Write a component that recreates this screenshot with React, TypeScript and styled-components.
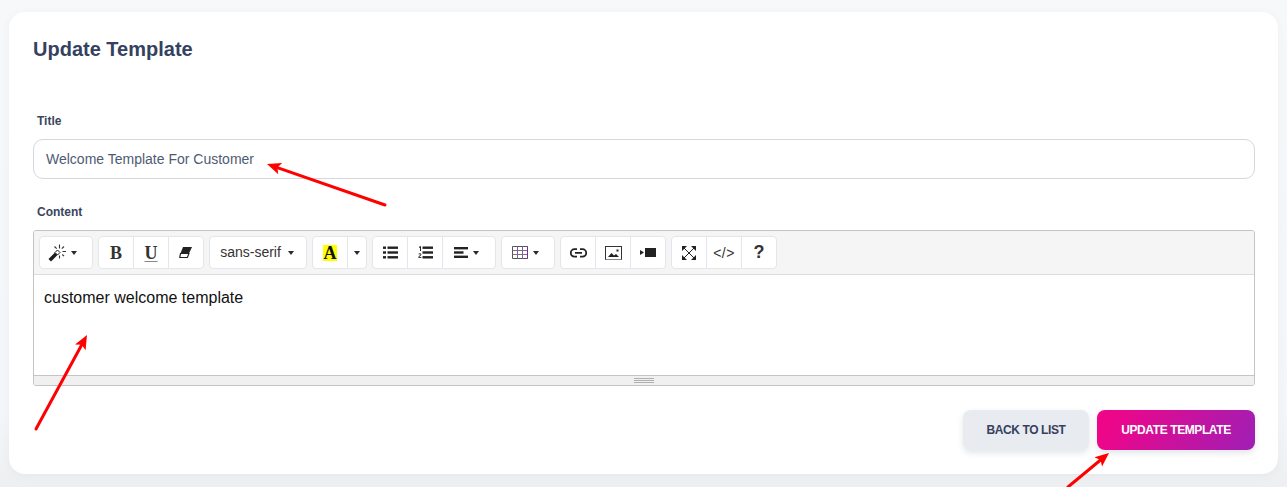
import React from "react";
import styled, { createGlobalStyle } from "styled-components";

const Global = createGlobalStyle`
  html, body { margin: 0; padding: 0; background: #f6f7fa; }
  body { font-family: "Liberation Sans", Arial, sans-serif; overflow: hidden; }
`;

const Page = styled.div`
  position: relative;
  width: 1287px;
  height: 487px;
  box-sizing: border-box;
  padding: 12px 9px 0 9px;
  overflow: hidden;
  background: linear-gradient(180deg, #f7f8fa 0%, #f5f6f9 85%, #eeeff1 100%);
`;

const Card = styled.main`
  box-sizing: border-box;
  height: 462px;
  background: #fff;
  border-radius: 16px;
  padding: 24px 23px 0 24px;
  box-shadow: 0 2px 10px rgba(60, 70, 90, 0.05);
`;

const Heading = styled.h1`
  margin: 0 0 51px;
  font-size: 20px;
  line-height: 26px;
  font-weight: 700;
  color: #34415f;
`;

const Label = styled.label`
  display: block;
  margin: 0 0 10px 4px;
  font-size: 12px;
  line-height: 16px;
  font-weight: 700;
  color: #3a4660;
`;

const TitleInput = styled.div`
  box-sizing: border-box;
  height: 40px;
  margin-bottom: 25px;
  padding: 0 12px;
  display: flex;
  align-items: center;
  border: 1px solid #d5d7dc;
  border-radius: 10px;
  font-size: 14px;
  color: #4f5b72;
`;

const Editor = styled.div`
  box-sizing: border-box;
  height: 156px;
  border: 1px solid #c4c4c4;
  border-radius: 3px;
  overflow: hidden;
  display: flex;
  flex-direction: column;
`;

const Toolbar = styled.div`
  box-sizing: border-box;
  height: 44px;
  flex: none;
  background: #f5f5f5;
  border-bottom: 1px solid #dcdcdc;
  padding: 5px 0 0 5px;
  display: flex;
  gap: 5px;
`;

const Group = styled.div`
  display: flex;
  height: 33px;
`;

const Tool = styled.div<{ $w?: number; $shift?: number }>`
  box-sizing: border-box;
  width: ${(p) => p.$w ?? 36}px;
  height: 33px;
  padding-right: ${(p) => p.$shift ?? 0}px;
  display: flex;
  align-items: center;
  justify-content: center;
  gap: 5px;
  background: #fff;
  border: 1px solid #e3e6ea;
  color: #2b2b2b;
  font-size: 14px;
  & + & { margin-left: -1px; }
  &:first-child { border-radius: 4px 0 0 4px; }
  &:last-child { border-radius: 0 4px 4px 0; }
  &:only-child { border-radius: 4px; }
`;

const Caret = styled.span`
  width: 0;
  height: 0;
  flex: none;
  border-left: 3.5px solid transparent;
  border-right: 3.5px solid transparent;
  border-top: 4px solid #2b2b2b;
`;

const SerifGlyph = styled.span<{ $underline?: boolean }>`
  font-family: "Liberation Serif", serif;
  font-weight: 700;
  font-size: 18px;
  line-height: 18px;
  color: #333;
  ${(p) => (p.$underline ? "text-decoration: underline; text-decoration-thickness: 1px; text-underline-offset: 2px; text-decoration-color: #888;" : "")}
`;

const HighlightGlyph = styled.span`
  display: block;
  width: 14px;
  height: 16px;
  background: #ffff00;
  color: #111;
  font-family: "Liberation Serif", serif;
  font-weight: 700;
  font-size: 18px;
  line-height: 17px;
  text-align: center;
`;

const FontName = styled.span`
  font-size: 14px;
  line-height: 16px;
  margin: -2px 2px 0 0;
  color: #333;
`;

const CodeGlyph = styled.span`
  font-size: 14px;
  color: #333;
  letter-spacing: 0.5px;
`;

const HelpGlyph = styled.span`
  font-size: 18px;
  font-weight: 700;
  color: #333;
`;

const Content = styled.div`
  flex: 1;
  background: #fff;
  padding: 13px 10px 0;
  font-size: 16px;
  line-height: 20px;
  color: #111;
`;

const Statusbar = styled.div`
  box-sizing: border-box;
  height: 10px;
  flex: none;
  background: #f0f0f0;
  border-top: 1px solid #c4c4c4;
  display: flex;
  align-items: center;
  justify-content: center;
`;

const Grip = styled.span`
  display: block;
  width: 20px;
  height: 5px;
  border-top: 1px solid #b0b0b0;
  border-bottom: 1px solid #b0b0b0;
  box-sizing: border-box;
  &::after {
    content: "";
    display: block;
    height: 1px;
    margin-top: 1px;
    background: #b0b0b0;
  }
`;

const Actions = styled.div`
  display: flex;
  justify-content: flex-end;
  gap: 8px;
  margin-top: 24px;
`;

const Button = styled.button<{ $primary?: boolean }>`
  height: 40px;
  border: 0;
  border-radius: 8px;
  width: ${(p) => (p.$primary ? 158 : 126)}px;
  padding: 0;
  font-family: inherit;
  font-size: 12px;
  font-weight: 700;
  letter-spacing: -0.4px;
  color: ${(p) => (p.$primary ? "#fff" : "#37415f")};
  background: ${(p) => (p.$primary ? "linear-gradient(118deg, #ee0689 10%, #9f1fb5 100%)" : "#e8ebef")};
  box-shadow: 0 3px 6px rgba(60, 70, 90, 0.14);
`;

const Arrows = styled.svg`
  position: absolute;
  inset: 0;
  pointer-events: none;
`;

const I = styled.svg`
  display: block;
  flex: none;
`;

const Wand = () => (
  <I width="18" height="18" viewBox="0 0 18 18">
    <path d="M0.5 15 L7 8.5 L9.5 11 L3 17.5 Z" fill="#1c1c1c" />
    <path d="M7 8.5 L9.5 6 L12 8.5 L9.5 11 Z" fill="#fff" stroke="#1c1c1c" strokeWidth="1" />
    <path d="M11.5 0.5v4M11.5 11.5v3M14.5 7.5h3.5M6.5 2.5l2.2 2.2M16 2.5L13.8 4.7M14.3 10.5l1.7 1.7" stroke="#333" strokeWidth="1.1" fill="none" />
  </I>
);
const Eraser = () => (
  <I width="14" height="13" viewBox="0 0 14 13">
    <path d="M4 1h9l-2.8 6H1.6Z" fill="#222" />
    <path d="M1.5 7.5h8.4L8.4 11.5H0.8Z" fill="#fff" stroke="#222" strokeWidth="1.2" />
  </I>
);
const Ul = () => (
  <I width="15" height="13" viewBox="0 0 15 13" fill="#222">
    <rect x="0" y="0.5" width="3" height="2.4" /><rect x="0" y="5.3" width="3" height="2.4" /><rect x="0" y="10.1" width="3" height="2.4" />
    <rect x="4.5" y="0.5" width="10.5" height="2.4" /><rect x="4.5" y="5.3" width="10.5" height="2.4" /><rect x="4.5" y="10.1" width="10.5" height="2.4" />
  </I>
);
const Ol = () => (
  <I width="15" height="13" viewBox="0 0 15 13" fill="#222">
    <path d="M2 0.3h1v4.7H2V1.5L1 2V1Z" />
    <path d="M0.4 8.3c.2-1.3 3-1.4 3 .2 0 1.2-1.6 1.7-2 2.6h2v.9H.3v-.8c.4-1.4 2.1-1.7 2.1-2.6 0-.6-1-.5-1.1 0Z" fill="#444" />
    <rect x="4.5" y="0.5" width="10.5" height="2.4" /><rect x="4.5" y="5.3" width="10.5" height="2.4" /><rect x="4.5" y="10.1" width="10.5" height="2.4" />
  </I>
);
const Align = () => (
  <I width="14" height="11" viewBox="0 0 14 11" fill="#222">
    <rect width="14" height="2.4" /><rect y="4.3" width="9.5" height="2.4" /><rect y="8.6" width="14" height="2.4" />
  </I>
);
const TableIcon = () => (
  <I width="16" height="13" viewBox="0 0 16 13" fill="none" strokeWidth="1">
    <path d="M.5.5h15v12H.5Z" stroke="#555" />
    <path d="M.5 4.5h15M.5 8.5h15" stroke="#8a6a7a" />
    <path d="M5.5.5v12M10.5.5v12" stroke="#6a6a9a" />
    <path d="M15.5.5v12" stroke="#7a2aa0" />
  </I>
);
const LinkIcon = () => (
  <I width="17" height="10" viewBox="0 0 17 10" fill="none" stroke="#222" strokeWidth="1.8">
    <path d="M7 1.2H4.5a3.6 3.6 0 0 0 0 7.4H7" />
    <path d="M10 1.2h2.5a3.6 3.6 0 0 1 0 7.4H10" />
    <path d="M5 4.9h7" />
  </I>
);
const Picture = () => (
  <I width="17" height="14" viewBox="0 0 17 14">
    <rect x=".5" y=".5" width="16" height="13" fill="#fff" stroke="#333" />
    <path d="M3 11 L6.5 7 L9 9.5 L11 8 L14 11 Z" fill="#222" />
    <rect x="11.5" y="3.5" width="2" height="2" fill="#222" />
    <path d="M.5 13.5h16" stroke="#888" />
  </I>
);
const Video = () => (
  <I width="16" height="9" viewBox="0 0 16 9" fill="#222">
    <rect x="5" y="0" width="11" height="9" />
    <path d="M0 2 L4 4.5 L0 7 Z" />
  </I>
);
const Expand = () => (
  <I width="14" height="14" viewBox="0 0 14 14" fill="#222">
    <path d="M0 0h5L0 5ZM14 0v5L9 0ZM0 14v-5l5 5ZM14 14H9l5-5Z" />
    <path d="M2 2l10 10M12 2L2 12" stroke="#222" strokeWidth="1" fill="none" />
  </I>
);

const Arrow = ({ x1, y1, x2, y2 }: { x1: number; y1: number; x2: number; y2: number }) => {
  const a = Math.atan2(y2 - y1, x2 - x1);
  const L = 14;
  const W = 6;
  const bx = x2 - L * Math.cos(a);
  const by = y2 - L * Math.sin(a);
  const nx = -Math.sin(a);
  const ny = Math.cos(a);
  const notchx = x2 - (L - 3) * Math.cos(a);
  const notchy = y2 - (L - 3) * Math.sin(a);
  return (
    <g>
      <line x1={x1} y1={y1} x2={notchx} y2={notchy} stroke="#ff0000" strokeWidth="3" strokeLinecap="round" />
      <polygon
        points={`${x2},${y2} ${bx + nx * W},${by + ny * W} ${notchx},${notchy} ${bx - nx * W},${by - ny * W}`}
        fill="#ff0000"
      />
    </g>
  );
};

export default function App() {
  return (
    <Page>
      <Global />
      <Card>
        <Heading>Update Template</Heading>
        <Label>Title</Label>
        <TitleInput>Welcome Template For Customer</TitleInput>
        <Label>Content</Label>
        <Editor>
          <Toolbar>
            <Group>
              <Tool $w={54} $shift={7}><Wand /><Caret /></Tool>
            </Group>
            <Group>
              <Tool><SerifGlyph>B</SerifGlyph></Tool>
              <Tool><SerifGlyph $underline>U</SerifGlyph></Tool>
              <Tool><Eraser /></Tool>
            </Group>
            <Group>
              <Tool $w={98} $shift={2}><FontName>sans-serif</FontName><Caret /></Tool>
            </Group>
            <Group>
              <Tool><HighlightGlyph>A</HighlightGlyph></Tool>
              <Tool $w={20}><Caret /></Tool>
            </Group>
            <Group>
              <Tool><Ul /></Tool>
              <Tool><Ol /></Tool>
              <Tool $w={54} $shift={6}><Align /><Caret /></Tool>
            </Group>
            <Group>
              <Tool $w={54} $shift={6}><TableIcon /><Caret /></Tool>
            </Group>
            <Group>
              <Tool><LinkIcon /></Tool>
              <Tool><Picture /></Tool>
              <Tool><Video /></Tool>
            </Group>
            <Group>
              <Tool><Expand /></Tool>
              <Tool><CodeGlyph>&lt;/&gt;</CodeGlyph></Tool>
              <Tool><HelpGlyph>?</HelpGlyph></Tool>
            </Group>
          </Toolbar>
          <Content>customer welcome template</Content>
          <Statusbar><Grip /></Statusbar>
        </Editor>
        <Actions>
          <Button>BACK TO LIST</Button>
          <Button $primary>UPDATE TEMPLATE</Button>
        </Actions>
      </Card>
      <Arrows width="1287" height="487" viewBox="0 0 1287 487">
        <Arrow x1={385} y1={205} x2={267} y2={164} />
        <Arrow x1={36} y1={429} x2={87} y2={335} />
        <Arrow x1={1068} y1={487} x2={1109} y2={453} />
      </Arrows>
    </Page>
  );
}
